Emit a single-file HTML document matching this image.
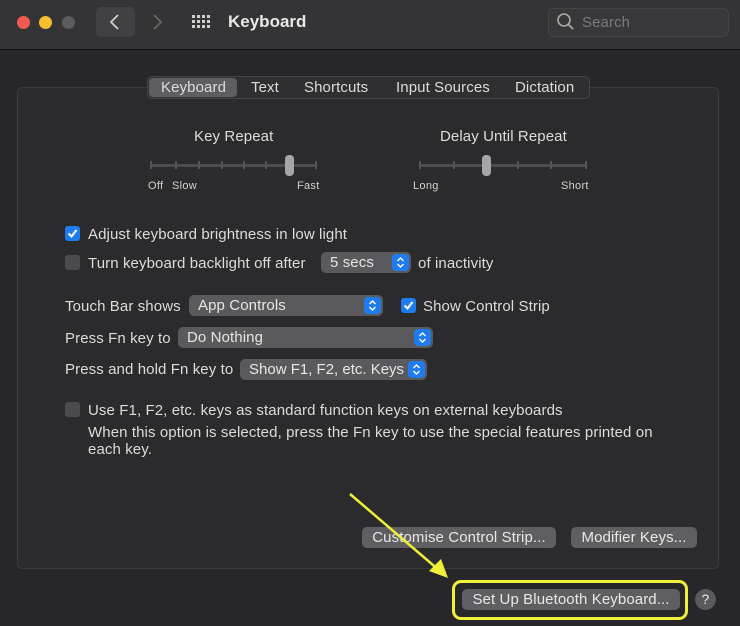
<!DOCTYPE html>
<html><head><style>
*{box-sizing:border-box;margin:0;padding:0}
body{width:740px;height:626px;background:#27272a;font-family:"Liberation Sans",sans-serif;color:#dcdcdc;position:relative;overflow:hidden;font-size:15px;letter-spacing:0.1px}
.a{position:absolute;white-space:nowrap}
.tb{position:absolute;left:0;top:0;width:740px;height:50px;background:#343436;border-bottom:1px solid #111}
.dot{position:absolute;top:16px;width:13px;height:13px;border-radius:50%}
.panel{position:absolute;left:17px;top:87px;width:702px;height:482px;border:1px solid #3c3c3e;border-radius:5px;background:#2b2b2d}
.tabs{position:absolute;left:147px;top:76px;width:443px;height:23px;background:#2f2f31;border:1px solid #454547;border-radius:5px}
.sel{background:#5e5e62;border-radius:4px}
.cb{position:absolute;width:15px;height:15px;border-radius:3px}
.off{background:#4b4b4e}
.pop{position:absolute;height:21px;background:#5a5a5d;border-radius:5px;color:#e6e6e6;padding:2px 0 0 9px}
.pop svg{position:absolute;right:2px;top:2px}
.btn{position:absolute;height:21px;background:#5f5f62;border-radius:5px;color:#e8e8e8;text-align:center;padding-top:2px}
.track{position:absolute;height:3px;background:#4d4d50;border-radius:2px}
.tick{position:absolute;width:2px;height:8px;background:#555558}
.thumb{position:absolute;width:9px;height:21px;background:#a5a5a8;border-radius:4px}
.sm{font-size:11px;color:#d0d0d0;letter-spacing:0.3px}
</style></head><body>
<div class="tb"></div>
<div class="dot" style="left:17px;background:#f05a55"></div>
<div class="dot" style="left:39px;background:#f4be2f"></div>
<div class="dot" style="left:62px;background:#5c5c5e"></div>
<div class="a" style="left:96px;top:7px;width:39px;height:30px;background:#414143;border-radius:5px"></div>
<svg class="a" style="left:108px;top:13px" width="14" height="18"><path d="M10 2 L3 9 L10 16" stroke="#cfcfcf" stroke-width="1.8" fill="none"/></svg>
<svg class="a" style="left:150px;top:13px" width="14" height="18"><path d="M4 2 L11 9 L4 16" stroke="#666" stroke-width="1.8" fill="none"/></svg>
<svg class="a" style="left:191px;top:14px" width="22" height="16"><g fill="#cfcfcf">
<rect x="1" y="1" width="3" height="3"/><rect x="6" y="1" width="3" height="3"/><rect x="11" y="1" width="3" height="3"/><rect x="16" y="1" width="3" height="3"/>
<rect x="1" y="6" width="3" height="3"/><rect x="6" y="6" width="3" height="3"/><rect x="11" y="6" width="3" height="3"/><rect x="16" y="6" width="3" height="3"/>
<rect x="1" y="11" width="3" height="3"/><rect x="6" y="11" width="3" height="3"/><rect x="11" y="11" width="3" height="3"/><rect x="16" y="11" width="3" height="3"/></g></svg>
<div class="a" style="left:228px;top:12px;font-size:17px;font-weight:bold;color:#e8e8e8;letter-spacing:0">Keyboard</div>
<div class="a" style="left:548px;top:8px;width:181px;height:29px;background:#38383a;border:1px solid #444446;border-radius:6px"></div>
<svg class="a" style="left:556px;top:12px" width="20" height="20"><circle cx="8" cy="8" r="6" stroke="#aaa" stroke-width="1.6" fill="none"/><path d="M12.5 12.5 L17 17" stroke="#aaa" stroke-width="1.8"/></svg>
<div class="a" style="left:582px;top:14px;color:#7a7a7c">Search</div>

<div class="panel"></div>
<div class="tabs"></div>
<div class="a sel" style="left:149px;top:78px;width:88px;height:19px"></div>
<div class="a" style="left:161px;top:79px">Keyboard</div>
<div class="a" style="left:251px;top:79px">Text</div>
<div class="a" style="left:304px;top:79px">Shortcuts</div>
<div class="a" style="left:396px;top:79px">Input Sources</div>
<div class="a" style="left:515px;top:79px">Dictation</div>

<div class="a" style="left:194px;top:128px">Key Repeat</div>
<div class="track" style="left:150px;top:164px;width:166px"></div>
<div class="tick" style="left:150px;top:161px"></div><div class="tick" style="left:175px;top:161px"></div><div class="tick" style="left:198px;top:161px"></div><div class="tick" style="left:221px;top:161px"></div><div class="tick" style="left:243px;top:161px"></div><div class="tick" style="left:265px;top:161px"></div><div class="tick" style="left:315px;top:161px"></div>
<div class="thumb" style="left:285px;top:155px"></div>
<div class="a sm" style="left:148px;top:180px">Off</div><div class="a sm" style="left:172px;top:180px">Slow</div><div class="a sm" style="left:297px;top:180px">Fast</div>

<div class="a" style="left:440px;top:128px">Delay Until Repeat</div>
<div class="track" style="left:419px;top:164px;width:167px"></div>
<div class="tick" style="left:419px;top:161px"></div><div class="tick" style="left:453px;top:161px"></div><div class="tick" style="left:517px;top:161px"></div><div class="tick" style="left:550px;top:161px"></div><div class="tick" style="left:585px;top:161px"></div>
<div class="thumb" style="left:482px;top:155px"></div>
<div class="a sm" style="left:413px;top:180px">Long</div><div class="a sm" style="left:561px;top:180px">Short</div>

<svg class="a" style="left:65px;top:226px" width="15" height="15"><rect width="15" height="15" rx="3" fill="#1f7cf0"/><path d="M3.5 7.5 L6.5 10.5 L11.5 4" stroke="#fff" stroke-width="2" fill="none"/></svg>
<div class="a" style="left:88px;top:226px">Adjust keyboard brightness in low light</div>
<div class="cb off" style="left:65px;top:255px"></div>
<div class="a" style="left:88px;top:255px">Turn keyboard backlight off after</div>
<div class="pop" style="left:321px;top:252px;width:90px">5 secs<svg width="17" height="17"><rect width="17" height="17" rx="4" fill="#1f7cf0"/><path d="M5.5 7 L8.5 4 L11.5 7 M5.5 10 L8.5 13 L11.5 10" stroke="#fff" stroke-width="1.4" fill="none"/></svg></div>
<div class="a" style="left:418px;top:255px">of inactivity</div>

<div class="a" style="left:65px;top:298px">Touch Bar shows</div>
<div class="pop" style="left:189px;top:295px;width:194px">App Controls<svg width="17" height="17"><rect width="17" height="17" rx="4" fill="#1f7cf0"/><path d="M5.5 7 L8.5 4 L11.5 7 M5.5 10 L8.5 13 L11.5 10" stroke="#fff" stroke-width="1.4" fill="none"/></svg></div>
<svg class="a" style="left:401px;top:298px" width="15" height="15"><rect width="15" height="15" rx="3" fill="#1f7cf0"/><path d="M3.5 7.5 L6.5 10.5 L11.5 4" stroke="#fff" stroke-width="2" fill="none"/></svg>
<div class="a" style="left:423px;top:298px">Show Control Strip</div>

<div class="a" style="left:65px;top:330px">Press Fn key to</div>
<div class="pop" style="left:178px;top:327px;width:255px">Do Nothing<svg width="17" height="17"><rect width="17" height="17" rx="4" fill="#1f7cf0"/><path d="M5.5 7 L8.5 4 L11.5 7 M5.5 10 L8.5 13 L11.5 10" stroke="#fff" stroke-width="1.4" fill="none"/></svg></div>
<div class="a" style="left:65px;top:361px">Press and hold Fn key to</div>
<div class="pop" style="left:240px;top:359px;width:187px;letter-spacing:0">Show F1, F2, etc. Keys<svg width="17" height="17"><rect width="17" height="17" rx="4" fill="#1f7cf0"/><path d="M5.5 7 L8.5 4 L11.5 7 M5.5 10 L8.5 13 L11.5 10" stroke="#fff" stroke-width="1.4" fill="none"/></svg></div>

<div class="cb off" style="left:65px;top:402px"></div>
<div class="a" style="left:88px;top:402px">Use F1, F2, etc. keys as standard function keys on external keyboards</div>
<div class="a" style="left:88px;top:424px">When this option is selected, press the Fn key to use the special features printed on</div>
<div class="a" style="left:88px;top:441px">each key.</div>

<div class="btn" style="left:362px;top:527px;width:194px">Customise Control Strip...</div>
<div class="btn" style="left:571px;top:527px;width:126px">Modifier Keys...</div>

<div class="btn" style="left:462px;top:589px;width:218px">Set Up Bluetooth Keyboard...</div>
<div class="a" style="left:452px;top:580px;width:236px;height:40px;border:3px solid #f0f03a;border-radius:9px"></div>
<div class="a" style="left:695px;top:589px;width:21px;height:21px;border-radius:50%;background:#5a5a5d;color:#e8e8e8;text-align:center;padding-top:2px;font-size:14px">?</div>
<svg class="a" style="left:340px;top:485px" width="120" height="100"><path d="M10 9 L100 86" stroke="#f0f03a" stroke-width="2.5"/><path d="M108 93 L89 86 L101 74 Z" fill="#f0f03a"/></svg>
</body></html>
